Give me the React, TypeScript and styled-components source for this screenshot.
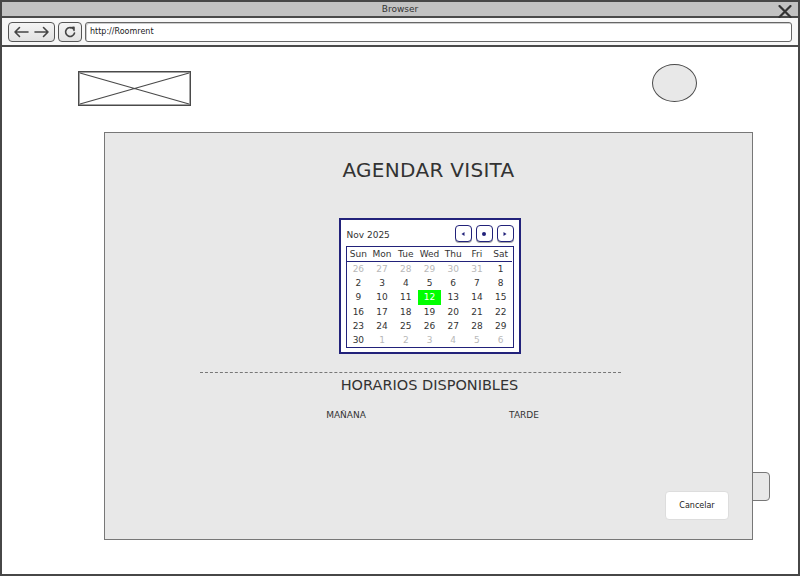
import React from "react";
import styled, { createGlobalStyle } from "styled-components";

const Global = createGlobalStyle`
  html, body { margin: 0; padding: 0; background: #fff; }
  body { font-family: "DejaVu Sans", "Liberation Sans", sans-serif; color: #333; }
  * { box-sizing: border-box; }
`;

const Frame = styled.div`
  width: 800px;
  height: 576px;
  border: 2px solid #474747;
  display: flex;
  flex-direction: column;
  background: #fff;
  overflow: hidden;
`;

const TitleBar = styled.div`
  height: 16px;
  background: #c2c2c2;
  border-bottom: 2px solid #4a4a4a;
  display: flex;
  align-items: center;
  justify-content: center;
  position: relative;
  font-size: 9px;
  color: #333;
  flex: none;
`;

const CloseIcon = styled.svg`
  position: absolute;
  right: 6px;
  top: 3px;
`;

const Toolbar = styled.div`
  height: 29px;
  flex: none;
  display: flex;
  align-items: center;
  gap: 3px;
  padding: 0 6px 0 6px;
  background: #f7f7f7;
  border-bottom: 2px solid #4a4a4a;
`;

const ToolButton = styled.div<{ $w: number }>`
  width: ${(p) => p.$w}px;
  height: 20px;
  border: 1.5px solid #555;
  border-radius: 4px;
  background: linear-gradient(#f4f4f4, #e2e2e2);
  display: flex;
  align-items: center;
  justify-content: space-evenly;
`;

const UrlField = styled.div`
  flex: 1;
  height: 20px;
  border: 1.5px solid #666;
  border-radius: 3px;
  background: #fff;
  box-shadow: inset 1px 1px 0 #ccc;
  display: flex;
  align-items: center;
  padding-left: 4px;
  font-size: 8px;
  color: #222;
`;

const Content = styled.div`
  flex: 1;
  display: flex;
  flex-direction: column;
`;

const HeaderRow = styled.div`
  margin-top: 17px;
  padding: 0 101px 0 76px;
  display: flex;
  justify-content: space-between;
  align-items: flex-start;
`;

const Logo = styled.svg`
  margin-top: 7px;
  display: block;
`;

const Avatar = styled.div`
  width: 45px;
  height: 38px;
  border-radius: 50%;
  border: 1.5px solid #4a4a4a;
  background: #e8e8e8;
`;

const PanelWrap = styled.div`
  position: relative;
  margin: 26px 0 0 102px;
  width: 649px;
`;

const GhostButton = styled.div`
  position: absolute;
  right: -17px;
  top: 340px;
  width: 40px;
  height: 29px;
  border: 1.5px solid #777;
  border-radius: 4px;
  background: #e8e8e8;
  z-index: 0;
`;

const Panel = styled.div`
  position: relative;
  z-index: 1;
  width: 649px;
  height: 408px;
  background: #e8e8e8;
  border: 1.5px solid #777;
  display: flex;
  flex-direction: column;
  align-items: center;
`;

const Title = styled.div`
  margin-top: 25px;
  font-size: 20px;
  line-height: 25px;
  color: #333;
  letter-spacing: 0.3px;
`;

const Calendar = styled.div`
  margin: 35px 0 0 2px;
  width: 182px;
  height: 136px;
  background: #fff;
  border: 2px solid #22227a;
  padding: 3px 5px 4px 5px;
  display: flex;
  flex-direction: column;
`;

const CalHeader = styled.div`
  height: 21px;
  display: flex;
  align-items: center;
  justify-content: space-between;
  font-size: 9px;
  color: #333;
  padding-top: 3px;
`;

const MonthLabel = styled.span`
  margin-left: 1px;
`;

const NavGroup = styled.div`
  display: flex;
  gap: 4px;
  margin-top: -3px;
`;

const NavBtn = styled.div`
  width: 17px;
  height: 17px;
  border: 1.5px solid #22227a;
  border-radius: 4px;
  background: #fff;
  box-shadow: 0 1px 0 #aaa;
  display: flex;
  align-items: center;
  justify-content: center;
`;

const Grid = styled.div`
  margin-top: 2px;
  flex: 1;
  border: 1.5px solid #22227a;
  display: grid;
  grid-template-columns: repeat(7, 1fr);
  grid-template-rows: 15px repeat(6, 1fr);
`;

const DayName = styled.div`
  font-size: 9px;
  color: #333;
  display: flex;
  align-items: center;
  justify-content: center;
  border-bottom: 1.5px solid #22227a;
`;

const Day = styled.div<{ $muted?: boolean; $sel?: boolean }>`
  font-size: 9px;
  color: ${(p) => (p.$sel ? "#fff" : p.$muted ? "#b8b8b8" : "#333")};
  background: ${(p) => (p.$sel ? "#00ff00" : "transparent")};
  display: flex;
  align-items: center;
  justify-content: center;
`;

const Divider = styled.div`
  align-self: flex-start;
  margin: 18px 0 0 95px;
  width: 421px;
  border-top: 1px dashed #777;
`;

const Subtitle = styled.div`
  margin: 3px 0 0 2px;
  font-size: 14.5px;
  line-height: 18px;
  color: #333;
`;

const Slots = styled.div`
  align-self: flex-start;
  margin: 16px 0 0 186px;
  display: flex;
`;

const SlotLabel = styled.div`
  width: 110px;
  text-align: center;
  font-size: 9px;
  color: #333;
  & + & { margin-left: 68px; }
`;

const Footer = styled.div`
  margin-top: auto;
  align-self: flex-end;
  padding: 0 23px 19px 0;
`;

const CancelButton = styled.div`
  width: 64px;
  height: 29px;
  background: #fff;
  border: 1px solid #ddd;
  border-radius: 4px;
  display: flex;
  align-items: center;
  justify-content: center;
  font-size: 8px;
  color: #222;
`;

const days: { d: number; m?: boolean; s?: boolean }[] = [
  ...[26, 27, 28, 29, 30, 31].map((d) => ({ d, m: true })),
  ...Array.from({ length: 30 }, (_, i) => ({ d: i + 1, s: i + 1 === 12 })),
  ...[1, 2, 3, 4, 5, 6].map((d) => ({ d, m: true })),
];

export default function App() {
  return (
    <>
      <Global />
      <Frame>
        <TitleBar>
          Browser
          <CloseIcon width="14" height="13" viewBox="0 0 14 13">
            <path d="M1.5 1 L12.5 12 M12.5 1 L1.5 12" stroke="#333" strokeWidth="2.2" strokeLinecap="round" />
          </CloseIcon>
        </TitleBar>
        <Toolbar>
          <ToolButton $w={47}>
            <svg width="16" height="12" viewBox="0 0 16 12">
              <path d="M15 6 H2 M6.5 1.5 L2 6 L6.5 10.5" stroke="#444" strokeWidth="1.6" fill="none" strokeLinecap="round" strokeLinejoin="round" />
            </svg>
            <svg width="16" height="12" viewBox="0 0 16 12">
              <path d="M1 6 H14 M9.5 1.5 L14 6 L9.5 10.5" stroke="#444" strokeWidth="1.6" fill="none" strokeLinecap="round" strokeLinejoin="round" />
            </svg>
          </ToolButton>
          <ToolButton $w={24}>
            <svg width="12" height="12" viewBox="0 0 12 12">
              <path d="M9.5 3 A4.5 4.5 0 1 0 10.5 7" stroke="#444" strokeWidth="1.6" fill="none" strokeLinecap="round" />
              <path d="M6.5 1.8 L10 1.2 L10 4.6" stroke="#444" strokeWidth="1.5" fill="none" strokeLinecap="round" strokeLinejoin="round" />
            </svg>
          </ToolButton>
          <UrlField>http://Roomrent</UrlField>
        </Toolbar>
        <Content>
          <HeaderRow>
            <Logo width="113" height="35" viewBox="0 0 113 35">
              <rect x="0.75" y="0.75" width="111.5" height="33.5" fill="#fff" stroke="#4a4a4a" strokeWidth="1.5" />
              <path d="M2 2 L111 33 M111 2 L2 33" stroke="#4a4a4a" strokeWidth="1.2" />
            </Logo>
            <Avatar />
          </HeaderRow>
          <PanelWrap>
            <GhostButton />
            <Panel>
              <Title>AGENDAR VISITA</Title>
              <Calendar>
                <CalHeader>
                  <MonthLabel>Nov 2025</MonthLabel>
                  <NavGroup>
                    <NavBtn>
                      <svg width="6" height="6" viewBox="0 0 6 6"><path d="M4.5 1 L1.5 3 L4.5 5 Z" fill="#22227a" /></svg>
                    </NavBtn>
                    <NavBtn>
                      <svg width="6" height="6" viewBox="0 0 6 6"><circle cx="3" cy="3" r="2" fill="#22227a" /></svg>
                    </NavBtn>
                    <NavBtn>
                      <svg width="6" height="6" viewBox="0 0 6 6"><path d="M1.5 1 L4.5 3 L1.5 5 Z" fill="#22227a" /></svg>
                    </NavBtn>
                  </NavGroup>
                </CalHeader>
                <Grid>
                  {["Sun", "Mon", "Tue", "Wed", "Thu", "Fri", "Sat"].map((n) => (
                    <DayName key={n}>{n}</DayName>
                  ))}
                  {days.map((x, i) => (
                    <Day key={i} $muted={x.m} $sel={x.s}>
                      {x.d}
                    </Day>
                  ))}
                </Grid>
              </Calendar>
              <Divider />
              <Subtitle>HORARIOS DISPONIBLES</Subtitle>
              <Slots>
                <SlotLabel>MAÑANA</SlotLabel>
                <SlotLabel>TARDE</SlotLabel>
              </Slots>
              <Footer>
                <CancelButton>Cancelar</CancelButton>
              </Footer>
            </Panel>
          </PanelWrap>
        </Content>
      </Frame>
    </>
  );
}
